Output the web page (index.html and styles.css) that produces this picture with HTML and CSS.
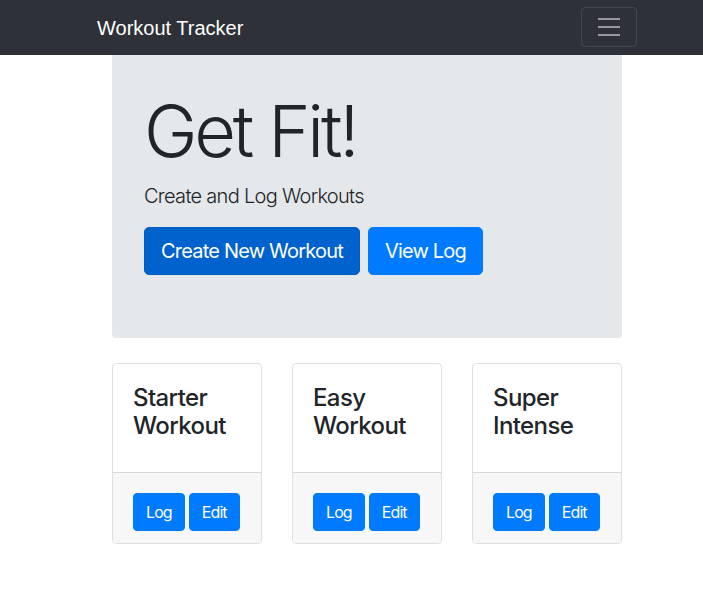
FILE: index.html
```html
<!DOCTYPE html>
<html lang="en">
<head>
<meta charset="utf-8">
<title>Workout Tracker</title>
<link rel="stylesheet" href="styles.css">
</head>
<body>
<nav class="navbar">
  <div class="container nav-inner">
    <a class="brand" href="#">Workout Tracker</a>
    <button class="toggler" type="button" aria-label="Toggle navigation">
      <svg width="30" height="30" viewBox="0 0 30 30"><path d="M4 7h22M4 15h22M4 23h22" stroke="rgba(255,255,255,0.5)" stroke-width="2" stroke-linecap="butt"/></svg>
    </button>
  </div>
</nav>
<main class="container">
  <section class="jumbotron">
    <h1 class="display">Get Fit!</h1>
    <p class="lead">Create and Log Workouts</p>
    <div class="actions">
      <a class="btn btn-lg btn-active" href="#">Create New Workout</a>
      <a class="btn btn-lg" href="#">View Log</a>
    </div>
  </section>
  <section class="cards">
    <div class="card">
      <div class="card-body"><h4 class="card-title">Starter Workout</h4></div>
      <div class="card-footer"><a class="btn" href="#">Log</a><a class="btn" href="#">Edit</a></div>
    </div>
    <div class="card">
      <div class="card-body"><h4 class="card-title">Easy Workout</h4></div>
      <div class="card-footer"><a class="btn" href="#">Log</a><a class="btn" href="#">Edit</a></div>
    </div>
    <div class="card">
      <div class="card-body"><h4 class="card-title">Super Intense</h4></div>
      <div class="card-footer"><a class="btn" href="#">Log</a><a class="btn" href="#">Edit</a></div>
    </div>
  </section>
</main>
</body>
</html>
```
FILE: styles.css
```css
* { box-sizing: border-box; }
html, body { margin: 0; padding: 0; }
body {
  font-family: Inter, "Noto Sans", sans-serif;
  font-size: 16px;
  line-height: 1.5;
  color: #212529;
  background: #fff;
}
.container {
  width: 540px;
  margin-left: 97px;
  padding: 0 15px;
}
.navbar {
  background: #2e3138;
  height: 55px;
}
.nav-inner {
  height: 55px;
  display: flex;
  align-items: center;
  justify-content: space-between;
  padding: 0;
}
.brand {
  font-family: "Liberation Sans", Arial, sans-serif;
  font-size: 20px;
  color: #fff;
  text-decoration: none;
  line-height: 30px;
}
.toggler {
  width: 56px;
  height: 40px;
  background: transparent;
  border: 1px solid rgba(255,255,255,0.1);
  border-radius: 4px;
  padding: 0;
  display: flex;
  align-items: center;
  justify-content: center;
  margin-top: -1px;
}
.toggler svg { display: block; }
.jumbotron {
  background: #e5e8eb;
  border-radius: 0 0 4px 4px;
  padding: 33px 32px 63px;
  margin-bottom: 25px;
}
.display {
  font-size: 72px;
  font-weight: 300;
  line-height: 1.2;
  margin: 0 0 7px;
  letter-spacing: -3.2px;
}
.lead {
  font-size: 20px;
  font-weight: 300;
  line-height: 30px;
  margin: 0 0 16px;
  letter-spacing: -0.7px;
}
.actions { display: flex; gap: 8px; }
.btn {
  display: inline-block;
  background: #007bff;
  color: #fff;
  text-decoration: none;
  border: 1px solid #007bff;
  border-radius: 4px;
  font-size: 16px;
  line-height: 24px;
  padding: 6px 12px;
  letter-spacing: -0.9px;
}
.btn-lg {
  font-size: 20px;
  line-height: 30px;
  padding: 8px 16px;
  border-radius: 5px;
  letter-spacing: -0.8px;
}
.btn-active { background: #0062cc; border-color: #005cbf; }
.cards {
  display: grid;
  grid-template-columns: repeat(3, 150px);
  column-gap: 30px;
}
.card {
  border: 1px solid rgba(0,0,0,0.125);
  border-radius: 4px;
  display: flex;
  flex-direction: column;
  overflow: hidden;
}
.card-body { padding: 20px 20px 8px; }
.card-title {
  font-size: 24px;
  font-weight: 500;
  line-height: 28px;
  margin: 0 0 24px;
  letter-spacing: -0.6px;
}
.card-footer {
  background: #f7f7f7;
  border-top: 1px solid rgba(0,0,0,0.125);
  padding: 20px 20px 12px;
  display: flex;
  gap: 4px;
}
```
